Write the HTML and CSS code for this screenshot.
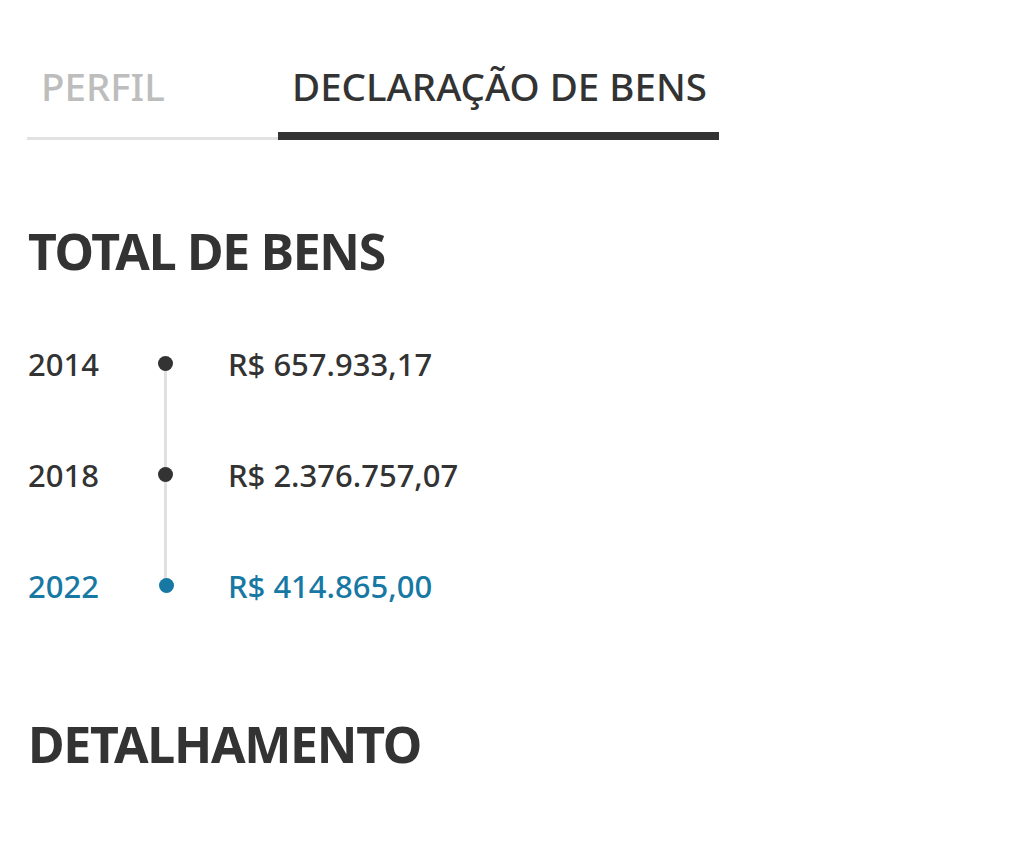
FILE: index.html
```html
<!DOCTYPE html>
<html lang="pt-BR">
<head>
<meta charset="utf-8">
<title>Declaração de bens</title>
<link rel="stylesheet" href="styles.css">
</head>
<body>
<main class="page">
  <nav class="tabs">
    <div class="tab tab-perfil">PERFIL</div>
    <div class="tab tab-active">DECLARAÇÃO DE BENS</div>
  </nav>

  <h2 class="section-title total-title">TOTAL DE BENS</h2>

  <ul class="timeline">
    <li class="row">
      <span class="year">2014</span>
      <span class="marker"><span class="dot"></span></span>
      <span class="value">R$ 657.933,17</span>
    </li>
    <li class="row">
      <span class="year">2018</span>
      <span class="marker"><span class="dot"></span></span>
      <span class="value">R$ 2.376.757,07</span>
    </li>
    <li class="row row-current">
      <span class="year">2022</span>
      <span class="marker"><span class="dot"></span></span>
      <span class="value">R$ 414.865,00</span>
    </li>
  </ul>

  <h2 class="section-title detail-title">DETALHAMENTO</h2>
</main>
</body>
</html>
```

FILE: styles.css
```css
html, body {
  margin: 0;
  padding: 0;
  background: #ffffff;
}

body {
  font-family: "Noto Sans", "Open Sans", sans-serif;
  color: #333333;
}

.page {
  padding: 60px 0 0 27px;
}

.tabs {
  display: inline-flex;
  border-bottom: 3px solid #e2e2e2;
}

.tab {
  font-size: 38.5px;
  line-height: 52px;
  padding: 0 12px 25px 14px;
  font-weight: 500;
}

.tab-perfil {
  width: 225px;
  color: #bdbdbd;
}

.tab-active {
  color: #333333;
  border-bottom: 8px solid #333333;
  margin-bottom: -3px;
  padding-bottom: 20px;
}

.section-title {
  margin: 0;
  font-size: 50px;
  font-weight: 700;
  line-height: 60px;
  letter-spacing: -1.3px;
  padding-left: 1px;
}

.total-title {
  margin-top: 81px;
}

.detail-title {
  margin-top: 73px;
}

.timeline {
  list-style: none;
  margin: 27px 0 0;
  padding: 0 0 0 1px;
}

.row {
  display: flex;
  align-items: center;
  height: 111px;
  font-size: 31px;
  font-weight: 500;
}

.year {
  width: 122px;
}

.marker {
  position: relative;
  width: 78px;
  height: 100%;
  display: flex;
  align-items: center;
}

.dot {
  width: 15px;
  height: 15px;
  border-radius: 50%;
  background: #333333;
  margin-left: 8px;
  position: relative;
  z-index: 1;
}

.row .marker::before {
  content: "";
  position: absolute;
  left: 14px;
  width: 3px;
  background: #e0e0e0;
  top: 0;
  bottom: 0;
}

.row:first-child .marker::before {
  top: 50%;
}

.row-current .marker::before {
  bottom: 50%;
}

.row-current {
  color: #1778a4;
}

.row-current .dot {
  background: #1778a4;
  margin-left: 9px;
}
```
